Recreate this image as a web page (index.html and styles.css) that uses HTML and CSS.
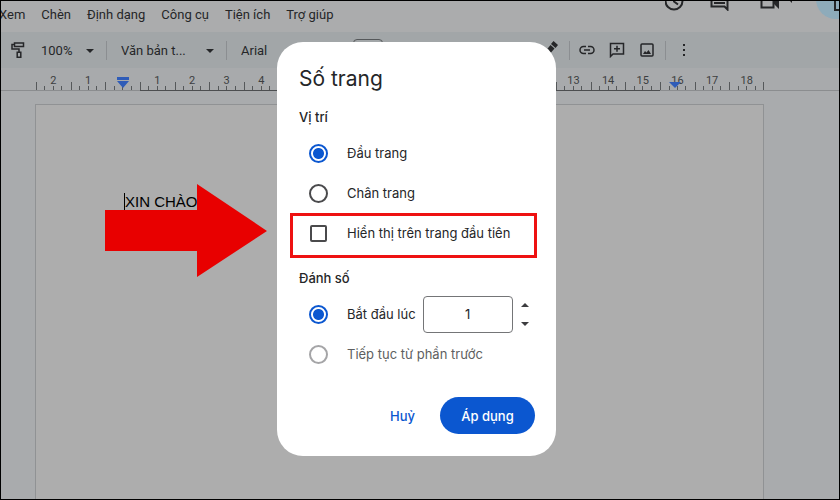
FILE: index.html
```html
<!DOCTYPE html>
<html lang="vi">
<head>
  <meta charset="UTF-8" />
  <meta name="viewport" content="width=device-width, initial-scale=1.0" />
  <title>Số trang</title>
  <link rel="stylesheet" href="styles.css">
</head>
<body>
  <header class="menubar">
    <nav class="menus">
      <button type="button">Xem</button>
      <button type="button">Chèn</button>
      <button type="button">Định dạng</button>
      <button type="button">Công cụ</button>
      <button type="button">Tiện ích</button>
      <button type="button">Trợ giúp</button>
    </nav>
    <div class="actions">
      <button type="button" aria-label="Lịch sử">
        <svg width="20" height="20" viewBox="0 0 20 20"><circle cx="9" cy="10" r="8.5"/><path d="M9 5v5.500l4 3"/></svg>
      </button>
      <button type="button" aria-label="Nhận xét">
        <svg width="20" height="20" viewBox="0 0 20 20"><path d="M1.500 2h16v16.500l-3-3h-13zM4 12h11"/></svg>
      </button>
      <button type="button" class="meet" aria-label="Cuộc gọi">
        <svg width="32" height="20" viewBox="0 0 32 20"><path d="M1.500 3h12v13.500h-12z"/><path class="fill" d="M14 10l5-5v13l-5-5zM29 9h6l-3 3z"/></svg>
      </button>
      <button type="button" class="share" aria-label="Chia sẻ">
        <svg width="14" height="16" viewBox="0 0 14 16"><path d="M1 5h12v10h-12z"/></svg>
      </button>
    </div>
  </header>

  <div class="toolbar">
    <button type="button" class="paint" aria-label="Sao chép định dạng">
      <svg width="14" height="18" viewBox="0 0 14 18"><path d="M3.500 2h9v3.500h-9zM3.500 3.500h-2.500v4.500h7v3M6.200 11.200h3.600v5h-3.600z"/></svg>
    </button>
    <label class="drop zoom"><select aria-label="Thu phóng"><option>100%</option></select></label>
    <span class="sep"></span>
    <label class="drop style"><select aria-label="Kiểu"><option>Văn bản t...</option></select></label>
    <span class="sep"></span>
    <label class="drop font"><select aria-label="Phông chữ"><option>Arial</option></select></label>
    <input class="size" type="text" aria-label="Cỡ chữ">
    <button type="button" class="marker" aria-label="Màu đánh dấu">
      <svg width="18" height="18" viewBox="0 0 18 18"><path class="fill" d="M12.500 0l4.500 4-2.500 3-4.500-4zM9.500 4l4 3.500-6.500 7.500h-4v-3z"/></svg>
    </button>
    <span class="sep"></span>
    <div class="inserts">
      <button type="button" aria-label="Chèn đường liên kết">
        <svg width="16" height="16" viewBox="0 0 16 16"><path d="M7 4.500h-2.500a3.500 3.500 0 0 0 0 7h2.500M9 4.500h2.500a3.500 3.500 0 0 1 0 7h-2.500M5 8h6"/></svg>
      </button>
      <button type="button" aria-label="Thêm nhận xét">
        <svg width="16" height="16" viewBox="0 0 16 16"><path d="M1.500 1.500h13v10.500h-10.500l-2.500 2.500zM8 3.800v6M5 6.800h6"/></svg>
      </button>
      <button type="button" aria-label="Chèn hình ảnh">
        <svg width="16" height="16" viewBox="0 0 16 16"><rect x="2" y="2" width="12" height="12" rx="1"/><path class="fill" d="M4 12l2-3 1.500 1.500 2-2.500 2.500 4z"/></svg>
      </button>
    </div>
    <span class="sep"></span>
    <button type="button" class="more" aria-label="Xem thêm">
      <svg width="4" height="14" viewBox="0 0 4 14"><path class="fill" d="M1 1h2v2h-2zM1 6h2v2h-2zM1 11h2v2h-2z"/></svg>
    </button>
  </div>

  <div class="ruler">
    <div class="ticks">
      <span>2</span><span>1</span>
      <span class="start"><svg width="12" height="11" viewBox="0 0 12 11"><path d="M0 0h12v3h-12zM0 4h12l-6 7z"/></svg></span>
      <span class="on">1</span><span class="on">2</span><span class="on">3</span><span class="on">4</span>
      <span class="on"></span><span class="on"></span><span class="on"></span><span class="on"></span>
      <span class="on"></span><span class="on"></span><span class="on"></span><span class="on"></span>
      <span class="on">13</span><span class="on">14</span><span class="on">15</span>
      <span class="end">16<svg width="12" height="6" viewBox="0 0 12 6"><path d="M0 0h12l-6 6z"/></svg></span>
      <span>17</span><span class="last">18</span>
    </div>
  </div>

  <main class="canvas">
    <article class="page"><p>XIN CHÀO</p></article>
  </main>

  <svg class="arrow" width="162" height="93" viewBox="0 0 162 93"><path d="M0 26h92V0l70 47-70 46V67H0z"/></svg>

  <div class="overlay">
    <form class="dialog" role="dialog" aria-labelledby="title">
      <h1 id="title">Số trang</h1>
      <h2>Vị trí</h2>
      <label class="row"><input type="radio" name="position" checked>Đầu trang</label>
      <label class="row"><input type="radio" name="position">Chân trang</label>
      <label class="row marked"><input type="checkbox">Hiển thị trên trang đầu tiên</label>
      <h2 class="second">Đánh số</h2>
      <div class="row">
        <input type="radio" name="numbering" id="startAt" checked>
        <label for="startAt">Bắt đầu lúc</label>
        <input class="number" type="text" inputmode="numeric" value="1" aria-label="Bắt đầu lúc">
        <div class="spin">
          <button type="button" aria-label="Tăng"></button>
          <button type="button" class="down" aria-label="Giảm"></button>
        </div>
      </div>
      <label class="row off"><input type="radio" name="numbering" disabled>Tiếp tục từ phần trước</label>
      <div class="buttons">
        <button type="button" class="cancel">Huỷ</button>
        <button type="submit" class="apply">Áp dụng</button>
      </div>
    </form>
  </div>
</body>
</html>
```

FILE: styles.css
```css
* {
  box-sizing: border-box;
}
body {
  display: flex;
  flex-direction: column;
  height: 100vh;
  margin: 0;
  overflow: hidden;
  background: #a9abad;
  color: #252628;
  font-family: Roboto, "Noto Sans", sans-serif;
  font-size: 13px;
}
body::after {
  content: "";
  position: fixed;
  inset: 0;
  border: 1px solid #000;
  pointer-events: none;
}
button, input, select {
  font: inherit;
  color: inherit;
  margin: 0;
  padding: 0;
  border: 0;
  background: none;
}
button {
  cursor: pointer;
}
svg {
  display: block;
  fill: none;
  stroke: #252628;
  stroke-width: 1.5;
}
.fill {
  fill: #252628;
  stroke: none;
}

/* menu bar */
.menubar {
  display: flex;
  justify-content: space-between;
  height: 32px;
  overflow: hidden;
  background: #abacad;
}
.menus {
  display: flex;
  gap: 16px;
  height: 29px;
  margin-left: -1px;
}
.actions {
  display: flex;
  align-items: flex-start;
  margin-top: -9px;
  margin-right: -56px;
}
.actions button {
  margin-right: 25px;
}
.actions svg {
  stroke-width: 2;
}
.actions .meet {
  margin: 0 24px 0 5px;
}
.actions .share {
  width: 80px;
  height: 40px;
  margin: -12px 0 0;
  padding: 7px 18px 0;
  border-radius: 20px;
  background: #8eabba;
}

/* toolbar */
.toolbar {
  display: flex;
  align-items: center;
  height: 36px;
  padding-left: 11px;
  background: #a2a6a8;
}
.sep {
  width: 1px;
  height: 19px;
  background: #8b8e91;
}
.drop {
  position: relative;
}
.drop select {
  width: 100%;
  appearance: none;
}
.drop::after {
  content: "";
  position: absolute;
  top: 6px;
  right: 12px;
  border: 4px solid transparent;
  border-top-color: #252628;
  border-bottom: 0;
}
.zoom {
  width: 65px;
  margin-left: 16px;
}
.style {
  width: 105px;
  margin-left: 14px;
}
.font {
  width: 98px;
  margin-left: 14px;
}
.size {
  width: 30px;
  height: 23px;
  margin-left: 14px;
  border: 1px solid #55585a;
  border-radius: 4px;
  text-align: center;
}
.marker {
  margin-left: 158px;
}
.marker + .sep {
  margin-left: 10px;
}
.inserts {
  display: flex;
  gap: 14px;
  margin: 0 10px 0 9px;
}
.more {
  margin-left: 16px;
}

/* ruler */
.ruler {
  height: 23px;
  padding: 0 76px 0 36px;
  border-bottom: 1px solid #8b8d8f;
  background: #a8aaac;
}
.ticks {
  display: flex;
  font-size: 11px;
}
.ticks span {
  position: relative;
  flex: 1;
  height: 22px;
  padding-top: 6px;
  text-align: center;
  line-height: 13px;
  color: #3c3e40;
  background:
    linear-gradient(#55585a, #55585a) 0 100% / 1px 8px no-repeat,
    linear-gradient(#55585a, #55585a) 25% 100% / 1px 4px no-repeat,
    linear-gradient(#55585a, #55585a) 50% 100% / 1px 4px no-repeat,
    linear-gradient(#55585a, #55585a) 75% 100% / 1px 4px no-repeat;
}
.ticks .on {
  box-shadow: 0 1px #4c4e50;
}
.ticks .last::after {
  content: "";
  position: absolute;
  right: 0;
  bottom: 0;
  width: 1px;
  height: 8px;
  background: #55585a;
}
.ticks svg {
  position: absolute;
  bottom: 2px;
  left: calc(50% - 6px);
  fill: #2f5cb8;
  stroke: none;
}
.ticks .end svg {
  left: calc(50% - 8px);
}

/* document */
.canvas {
  display: flex;
  flex: 1;
  padding: 13px 76px 0 35px;
}
.page {
  flex: 1;
  padding: 88px;
  border: 1px solid #909294;
  border-bottom: 0;
  background: #adadad;
}
.page p {
  margin: 0;
  border-left: 1px solid #000;
  color: #000;
  font: 15px/18px "Liberation Sans", Arial, sans-serif;
}
.arrow {
  position: absolute;
  top: 184px;
  left: 105px;
}
.arrow path {
  fill: #e80000;
  stroke: none;
}

/* dialog */
.overlay {
  position: fixed;
  inset: 0;
  display: flex;
  align-items: center;
  justify-content: center;
  padding: 0 7px 2px 0;
}
.dialog {
  width: 279px;
  padding: 22px 21px 22px 22px;
  border-radius: 26px;
  background: #fff;
  font-family: Inter, "Noto Sans", sans-serif;
}
.dialog h1 {
  margin: 0 0 13px;
  font-size: 21px;
  font-weight: 400;
  line-height: 30px;
}
.dialog h2 {
  margin: 0 0 6px;
  font-size: 13px;
  font-weight: 500;
  line-height: 20px;
}
.dialog .second {
  margin-top: 15px;
}
.row {
  position: relative;
  display: flex;
  align-items: center;
  height: 40px;
  padding-left: 10px;
}
.row input[type="radio"],
.row input[type="checkbox"] {
  flex: none;
  width: 19px;
  height: 19px;
  margin-right: 19px;
  border: 2px solid #4a4a4c;
  border-radius: 50%;
  appearance: none;
}
.row input[type="checkbox"] {
  width: 17px;
  height: 17px;
  margin: 0 20px 0 1px;
  border-radius: 2px;
}
.row input[type="radio"]:checked {
  border-color: #0b57d0;
  background: radial-gradient(circle, #0b57d0 5px, transparent 6px);
}
.row input:disabled {
  border-color: #a5a5a7;
}
.off {
  color: #5e5f61;
}
.marked::after {
  content: "";
  position: absolute;
  inset: 0 -2px -5px -9px;
  border: 3px solid #ee1111;
}
.row .number {
  width: 90px;
  height: 37px;
  margin-left: 7px;
  border: 1px solid #747577;
  border-radius: 4px;
  text-align: center;
}
.spin {
  display: flex;
  flex-direction: column;
  gap: 15px;
  margin-left: 8px;
}
.spin button {
  border: 4px solid transparent;
  border-top: 0;
  border-bottom-color: #3c3d3f;
}
.spin .down {
  border-top: 4px solid #3c3d3f;
  border-bottom: 0;
}
.buttons {
  display: flex;
  justify-content: flex-end;
  margin-top: 23px;
  font-weight: 500;
}
.cancel {
  padding: 0 25px;
  color: #0b57d0;
}
.apply {
  width: 95px;
  height: 37px;
  border-radius: 19px;
  background: #0b57d0;
  color: #fff;
}
```
